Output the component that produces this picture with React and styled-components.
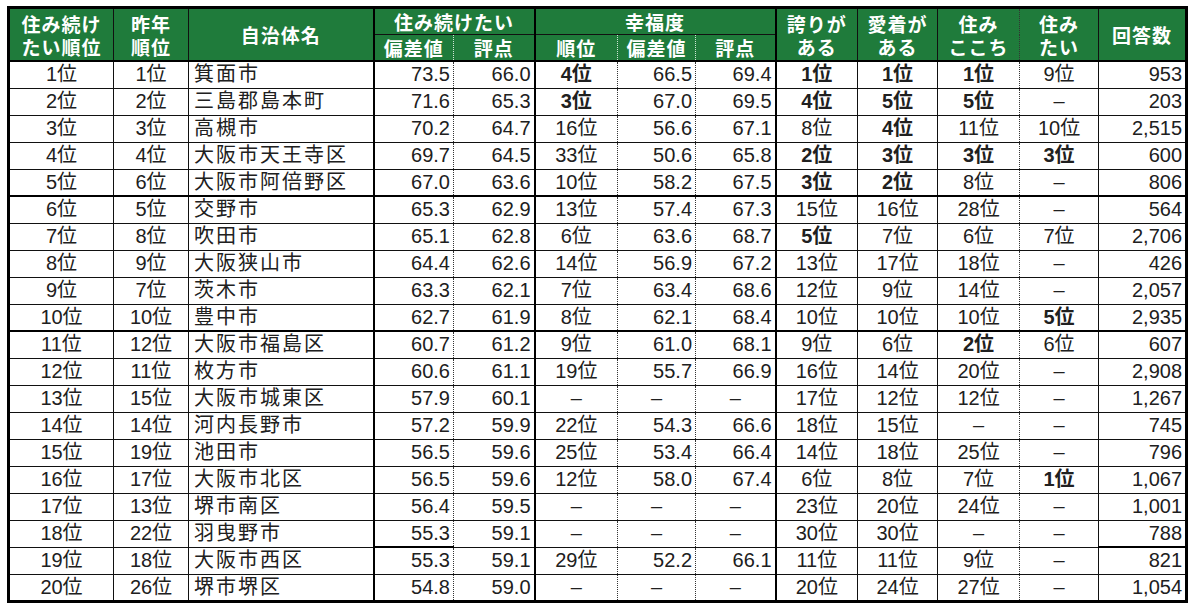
import styled, { createGlobalStyle } from "styled-components";

const GlobalStyle = createGlobalStyle`
	html, body {
		margin: 0;
		padding: 0;
		background: #fff;
	}
	body {
		font-family: "Liberation Sans", "Noto Sans CJK JP", sans-serif;
		color: #202020;
	}
`;

const Page = styled.div`
	padding: 6px 0 0 7px;
	width: 1200px;
	height: 608px;
	box-sizing: border-box;
	overflow: hidden;
`;

const Table = styled.table`
	border-collapse: collapse;
	table-layout: fixed;
	border: 3px solid #000;
	width: 1181px;
`;

const lines = {
	thin: "1px solid #111",
	thick: "2px solid #000",
	dot: "1px dotted #333",
	hdot: "1px dotted #cfe5d4",
};

const Head = styled.th`
	background: #1f7b3b;
	color: #fff;
	font-family: "Noto Sans CJK JP", sans-serif;
	font-weight: 700;
	font-size: 19px;
	line-height: 23px;
	letter-spacing: 1px;
	padding: 0;
	text-align: center;
	vertical-align: middle;
	border-right: ${(p) => lines[p.$r || "thin"]};
	border-bottom: ${(p) => (p.$sub ? "1px solid #111" : "2px solid #000")};
	height: ${(p) => (p.$h ? p.$h + "px" : "auto")};
`;

const Line = styled.span`
	display: block;
	height: 23px;
`;

const Row = styled.tr`
	height: 27px;
`;

const Cell = styled.td`
	font-size: 20px;
	line-height: 25px;
	padding: 0 ${(p) => (p.$align === "right" ? "3px" : "0")} 0 ${(p) => (p.$align === "left" ? "5px" : "0")};
	text-align: ${(p) => p.$align};
	font-weight: ${(p) => (p.$bold ? 700 : 400)};
	white-space: nowrap;
	overflow: hidden;
	border-right: ${(p) => lines[p.$r]};
	border-bottom: ${(p) => (p.$thickBottom ? lines.thick : lines.thin)};
	letter-spacing: ${(p) => (p.$align === "left" ? "2px" : "0")};
`;

const cols = [
	{ w: 105, align: "center", r: "thin" },
	{ w: 75, align: "center", r: "thin" },
	{ w: 185, align: "left", r: "thick" },
	{ w: 80, align: "right", r: "dot" },
	{ w: 81, align: "right", r: "thick" },
	{ w: 83, align: "center", r: "dot" },
	{ w: 78, align: "right", r: "dot" },
	{ w: 80, align: "right", r: "thick" },
	{ w: 82, align: "center", r: "thin" },
	{ w: 80, align: "center", r: "thin" },
	{ w: 82, align: "center", r: "dot" },
	{ w: 79, align: "center", r: "thin" },
	{ w: 88, align: "right", r: "thin" },
];

// "*" marks a bold (top five) rank
const rows = [
	["1位", "1位", "箕面市", "73.5", "66.0", "4位*", "66.5", "69.4", "1位*", "1位*", "1位*", "9位", "953"],
	["2位", "2位", "三島郡島本町", "71.6", "65.3", "3位*", "67.0", "69.5", "4位*", "5位*", "5位*", "–", "203"],
	["3位", "3位", "高槻市", "70.2", "64.7", "16位", "56.6", "67.1", "8位", "4位*", "11位", "10位", "2,515"],
	["4位", "4位", "大阪市天王寺区", "69.7", "64.5", "33位", "50.6", "65.8", "2位*", "3位*", "3位*", "3位*", "600"],
	["5位", "6位", "大阪市阿倍野区", "67.0", "63.6", "10位", "58.2", "67.5", "3位*", "2位*", "8位", "–", "806"],
	["6位", "5位", "交野市", "65.3", "62.9", "13位", "57.4", "67.3", "15位", "16位", "28位", "–", "564"],
	["7位", "8位", "吹田市", "65.1", "62.8", "6位", "63.6", "68.7", "5位*", "7位", "6位", "7位", "2,706"],
	["8位", "9位", "大阪狭山市", "64.4", "62.6", "14位", "56.9", "67.2", "13位", "17位", "18位", "–", "426"],
	["9位", "7位", "茨木市", "63.3", "62.1", "7位", "63.4", "68.6", "12位", "9位", "14位", "–", "2,057"],
	["10位", "10位", "豊中市", "62.7", "61.9", "8位", "62.1", "68.4", "10位", "10位", "10位", "5位*", "2,935"],
	["11位", "12位", "大阪市福島区", "60.7", "61.2", "9位", "61.0", "68.1", "9位", "6位", "2位*", "6位", "607"],
	["12位", "11位", "枚方市", "60.6", "61.1", "19位", "55.7", "66.9", "16位", "14位", "20位", "–", "2,908"],
	["13位", "15位", "大阪市城東区", "57.9", "60.1", "–", "–", "–", "17位", "12位", "12位", "–", "1,267"],
	["14位", "14位", "河内長野市", "57.2", "59.9", "22位", "54.3", "66.6", "18位", "15位", "–", "–", "745"],
	["15位", "19位", "池田市", "56.5", "59.6", "25位", "53.4", "66.4", "14位", "18位", "25位", "–", "796"],
	["16位", "17位", "大阪市北区", "56.5", "59.6", "12位", "58.0", "67.4", "6位", "8位", "7位", "1位*", "1,067"],
	["17位", "13位", "堺市南区", "56.4", "59.5", "–", "–", "–", "23位", "20位", "24位", "–", "1,001"],
	["18位", "22位", "羽曳野市", "55.3", "59.1", "–", "–", "–", "30位", "30位", "–", "–", "788"],
	["19位", "18位", "大阪市西区", "55.3", "59.1", "29位", "52.2", "66.1", "11位", "11位", "9位", "–", "821"],
	["20位", "26位", "堺市堺区", "54.8", "59.0", "–", "–", "–", "20位", "24位", "27位", "–", "1,054"],
];

function isThick(ri, ci) {
	if (ri === 4 || ri === 9) return true;
	return ri === 17 && (ci === 3 || ci === 12);
}

function TwoLine({ a, b }) {
	return (
		<>
			<Line>{a}</Line>
			<Line>{b}</Line>
		</>
	);
}

function App() {
	return (
		<Page>
			<GlobalStyle />
			<Table>
				<colgroup>
					{cols.map((c, i) => (
						<col key={i} style={{ width: c.w }} />
					))}
				</colgroup>
				<thead>
					<tr>
						<Head rowSpan={2} $h={25}>
							<TwoLine a="住み続け" b="たい順位" />
						</Head>
						<Head rowSpan={2}>
							<TwoLine a="昨年" b="順位" />
						</Head>
						<Head rowSpan={2} $r="thick">
							自治体名
						</Head>
						<Head colSpan={2} $sub $r="thick" $h={25}>
							住み続けたい
						</Head>
						<Head colSpan={3} $sub $r="thick">
							幸福度
						</Head>
						<Head rowSpan={2}>
							<TwoLine a="誇りが" b="ある" />
						</Head>
						<Head rowSpan={2}>
							<TwoLine a="愛着が" b="ある" />
						</Head>
						<Head rowSpan={2} $r="dot">
							<TwoLine a="住み" b="ここち" />
						</Head>
						<Head rowSpan={2}>
							<TwoLine a="住み" b="たい" />
						</Head>
						<Head rowSpan={2}>回答数</Head>
					</tr>
					<tr>
						<Head $r="hdot" $h={25}>偏差値</Head>
						<Head $r="thick">評点</Head>
						<Head $r="hdot">順位</Head>
						<Head $r="hdot">偏差値</Head>
						<Head $r="thick">評点</Head>
					</tr>
				</thead>
				<tbody>
					{rows.map((row, ri) => (
						<Row key={ri}>
							{row.map((v, ci) => {
								const bold = v.endsWith("*");
								const text = bold ? v.slice(0, -1) : v;
								const align = text === "–" ? "center" : cols[ci].align;
								return (
									<Cell key={ci} $align={align} $bold={bold} $r={cols[ci].r} $thickBottom={isThick(ri, ci)}>
										{text}
									</Cell>
								);
							})}
						</Row>
					))}
				</tbody>
			</Table>
		</Page>
	);
}

export default App;
